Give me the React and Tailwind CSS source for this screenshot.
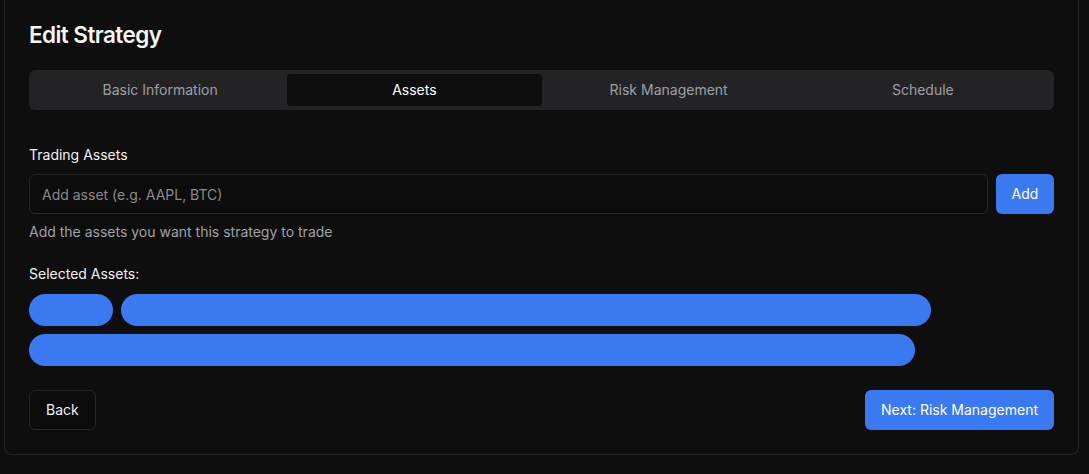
import { useState } from "react";

const tabs = ["Basic Information", "Assets", "Risk Management", "Schedule"];

const assets = [
  { id: 1, w: 84 },
  { id: 2, w: 810 },
  { id: 3, w: 886 },
];

export default function App() {
  const [activeTab, setActiveTab] = useState("Assets");
  const [asset, setAsset] = useState("");

  return (
    <div
      className="min-h-[474px] w-full bg-[#0e0e0e] text-white"
      style={{ fontFamily: "Inter, 'Noto Sans', sans-serif" }}
    >
      <div className="ml-[4px] w-[1075px] rounded-b-lg border-x border-b border-[#262626] bg-[#0e0e0e] px-6 pb-6 pt-[24px]">
        <h2 className="text-[22.5px] font-semibold leading-[22px] tracking-tight text-[#f5f5f5]">
          Edit Strategy
        </h2>

        <div className="mt-6 grid h-10 grid-cols-4 rounded-md bg-[#232325] p-1">
          {tabs.map((t) => (
            <button
              key={t}
              onClick={() => setActiveTab(t)}
              className={
                activeTab === t
                  ? "rounded-[4px] bg-[#0e0e0e] text-sm text-white"
                  : "rounded-[4px] text-sm text-[#9f9fa6]"
              }
            >
              {t}
            </button>
          ))}
        </div>

        <label className="mt-[35px] block text-sm leading-5 text-[#f2f2f2]">
          Trading Assets
        </label>
        <div className="mt-[9px] flex gap-2">
          <input
            type="text"
            value={asset}
            onChange={(e) => setAsset(e.target.value)}
            placeholder="Add asset (e.g. AAPL, BTC)"
            className="h-10 flex-1 rounded-md border border-[#262626] bg-[#0c0c0c] px-3 text-sm text-white outline-none placeholder:text-[#8b8b8f]"
          />
          <button className="h-10 w-[58px] rounded-md bg-[#3b79f0] text-sm text-white">
            Add
          </button>
        </div>
        <p className="mt-2 text-sm leading-5 text-[#a1a1a6]">
          Add the assets you want this strategy to trade
        </p>

        <p className="mt-[22px] text-sm leading-5 text-[#f2f2f2]">
          Selected Assets:
        </p>
        <div className="mt-[10px] flex w-[920px] flex-wrap gap-2">
          {assets.map((a) => (
            <span
              key={a.id}
              className="block h-8 rounded-full bg-[#3b79f0]"
              style={{ width: a.w }}
            />
          ))}
        </div>

        <div className="mt-6 flex justify-between">
          <button className="h-10 rounded-md border border-[#262626] bg-[#0c0c0c] px-4 text-sm text-[#f2f2f2]">
            Back
          </button>
          <button className="h-10 rounded-md bg-[#3b79f0] px-4 text-sm text-white">
            Next: Risk Management
          </button>
        </div>
      </div>
    </div>
  );
}
